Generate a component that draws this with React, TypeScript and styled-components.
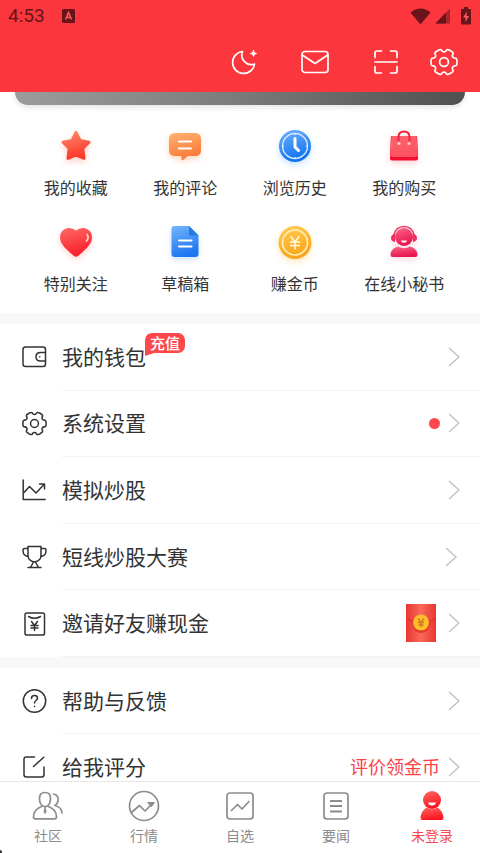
import React from 'react';
import styled, { createGlobalStyle, css } from 'styled-components';

const GlobalStyle = createGlobalStyle`
  *, *::before, *::after { box-sizing: border-box; }
  body {
    margin: 0;
    background: #fff;
    color: #333;
    font-family: 'Noto Sans CJK SC', 'Noto Sans', sans-serif;
  }
  button { margin: 0; padding: 0; border: 0; background: none; font: inherit; color: inherit; cursor: pointer; }
  a { color: inherit; text-decoration: none; }
  svg { display: block; flex: none; }
`;

const Screen = styled.div`
  display: flex;
  flex-direction: column;
  height: 100vh;
  overflow: hidden;
`;

const Header = styled.header`
  flex: none;
  background: #fb363c;
`;

const StatusBar = styled.div`
  display: flex;
  align-items: center;
  height: 32px;
  padding: 0 6px 0 8px;
  color: #69141a;
`;

const Clock = styled.time`
  font: 19px/32px Roboto, sans-serif;
  margin-right: 17px;
`;

const StatusIcons = styled.div`
  display: flex;
  align-items: center;
  gap: 4px;
  margin-left: auto;
`;

const Toolbar = styled.div`
  display: flex;
  justify-content: flex-end;
  height: 60px;
  padding-right: 13px;
`;

const ToolButton = styled.button<{ $narrow?: boolean }>`
  display: flex;
  align-items: center;
  justify-content: center;
  width: ${(p) => (p.$narrow ? 46 : 71)}px;
  color: #fff;
`;

const Content = styled.main`
  flex: 1;
  min-height: 0;
  overflow-y: auto;
  scrollbar-width: none;
`;

const Banner = styled.div`
  height: 13px;
  margin: 0 15px;
  border-radius: 0 0 13px 13px;
  background: linear-gradient(100deg, #9c9c9c, #7e7e7e 45%, #505050);
  box-shadow: 0 2px 6px rgba(0, 0, 0, 0.12);
`;

const Shortcuts = styled.nav`
  display: grid;
  grid-template-columns: repeat(4, 1fr);
  row-gap: 16px;
  padding: 24px 21px 8px;
`;

const Shortcut = styled.a`
  display: flex;
  flex-direction: column;
  align-items: center;
  gap: 12px;
  height: 80px;
  font-size: 16px;
  line-height: 24px;
  white-space: nowrap;
`;

const Glow = styled.span<{ $color: string }>`
  display: block;
  filter: drop-shadow(0 3px 3px ${(p) => p.$color});
`;

const Group = styled.section<{ $rows: number }>`
  display: flex;
  flex-direction: column;
  border-top: 11px solid #f8f8f8;
  ${(p) => p.$rows === 5 && css`min-height: 344px;`}
`;

const Row = styled.a`
  display: flex;
  flex: 1 0 0;
  min-height: 66px;
  align-items: stretch;
  gap: 15px;
  padding-left: 22px;
`;

const RowIcon = styled.span`
  display: flex;
  align-items: center;
  justify-content: center;
  width: 25px;
`;

const RowBody = styled.span<{ $inset?: boolean }>`
  display: flex;
  flex: 1;
  align-items: center;
  padding-right: ${(p) => (p.$inset ? 23 : 20)}px;
  border-bottom: 1px solid #f3f3f3;
`;

const RowLabel = styled.span`
  position: relative;
  padding-bottom: 2px;
  font-size: 21px;
  line-height: 28px;
`;

const Badge = styled.span`
  position: absolute;
  left: 83px;
  top: -9px;
  padding: 0 5px;
  border-radius: 7px 7px 7px 0;
  background: #fd484c;
  color: #fff;
  font-size: 15px;
  font-weight: 500;
  line-height: 20px;
  white-space: nowrap;
  &::after {
    content: '';
    position: absolute;
    left: 0;
    top: 100%;
    border-top: 3px solid #fd484c;
    border-right: 9px solid transparent;
  }
`;

const RowEnd = styled.span<{ $gap?: number }>`
  display: flex;
  align-items: center;
  gap: ${(p) => p.$gap ?? 8}px;
  margin-left: auto;
`;

const Dot = styled.span`
  width: 11px;
  height: 11px;
  border-radius: 50%;
  background: #fd484c;
`;

const Hint = styled.span`
  padding-bottom: 2px;
  color: #fb4247;
  font-size: 18px;
  line-height: 26px;
`;

const TabBar = styled.nav`
  position: relative;
  display: grid;
  grid-template-columns: repeat(5, 1fr);
  flex: none;
  height: 72px;
  border-top: 1px solid #e8e8e8;
  background: #fff;
  &::after {
    content: '';
    position: absolute;
    left: 0;
    bottom: 0;
    width: 2px;
    height: 3px;
    border-top-right-radius: 2px;
    background: #333;
  }
`;

const Tab = styled.a<{ $active?: boolean }>`
  display: flex;
  flex-direction: column;
  align-items: center;
  gap: 2px;
  padding-top: 8px;
  color: ${(p) => (p.$active ? '#fb4a4f' : '#8c8c8c')};
  font-size: 14px;
  line-height: 22px;
`;

/* Six-lobed cog outline with rounded corners, centred in a 28 unit box. */
const cogPath = (() => {
  const pts: number[][] = [];
  const polar = (r: number, deg: number) => {
    const a = (deg * Math.PI) / 180;
    pts.push([14 + r * Math.cos(a), 14 + r * Math.sin(a)]);
  };
  for (let a = 0; a < 360; a += 60) {
    polar(13.5, a - 16);
    polar(13.5, a + 16);
    polar(10.2, a + 22);
    polar(10.2, a + 38);
  }
  const lerp = (p: number[], q: number[], t: number) =>
    `${(p[0] + (q[0] - p[0]) * t).toFixed(2)} ${(p[1] + (q[1] - p[1]) * t).toFixed(2)}`;
  return (
    pts
      .map((p, i) => {
        const prev = pts[(i + pts.length - 1) % pts.length];
        const next = pts[(i + 1) % pts.length];
        return `${i ? 'L' : 'M'}${lerp(p, prev, 0.42)}Q${p[0].toFixed(2)} ${p[1].toFixed(2)} ${lerp(p, next, 0.42)}`;
      })
      .join('') + 'Z'
  );
})();

type LineProps = { w: number; h: number; box?: string; sw?: number; children: React.ReactNode };
const Line = ({ w, h, box, sw = 1.5, children }: LineProps) => (
  <svg width={w} height={h} viewBox={box ?? `0 0 ${w} ${h}`} fill="none" stroke="currentColor"
    strokeWidth={sw} strokeLinecap="round" strokeLinejoin="round" aria-hidden="true">
    {children}
  </svg>
);

const Cog = ({ size, sw }: { size: number; sw: number }) => (
  <Line w={size} h={size} box="0 0 28 28" sw={sw}>
    <path d={cogPath} />
    <circle cx="14" cy="14" r="4.4" />
  </Line>
);

const Chevron = () => (
  <svg width="12" height="20" viewBox="0 0 12 20" fill="none" stroke="#c2c2c2" strokeWidth="1.5" aria-hidden="true">
    <path d="M1 1l10 9-10 9" />
  </svg>
);

const Grad = ({ id, from, to }: { id: string; from: string; to: string }) => (
  <linearGradient id={id} x1="0" y1="0" x2="0.3" y2="1">
    <stop offset="0" stopColor={from} />
    <stop offset="1" stopColor={to} />
  </linearGradient>
);

const Pic = ({ children }: { children: React.ReactNode }) => (
  <svg width="34" height="34" viewBox="0 0 34 34" aria-hidden="true">{children}</svg>
);

const shortcuts = [
  {
    label: '我的收藏', glow: 'rgba(255,90,60,.3)',
    icon: (
      <Pic>
        <defs><Grad id="star" from="#ff8a6a" to="#fc3a2c" /></defs>
        <path fill="url(#star)" stroke="url(#star)" strokeWidth="3" strokeLinejoin="round"
          d="M17 3.500l4 8 9 1.700-6.200 6.300 1.200 9.800-8-3.400-8 3.400 1.200-9.800L4 13.200l9-1.700z" />
      </Pic>
    ),
  },
  {
    label: '我的评论', glow: 'rgba(255,130,60,.3)',
    icon: (
      <Pic>
        <defs><Grad id="chat" from="#ffb272" to="#fb7a38" /></defs>
        <path fill="url(#chat)" d="M7 4h20q6 0 6 6v11q0 6-6 6h-7l-5 4q-1.500 1-1.500-1v-3H7q-6 0-6-6V10q0-6 6-6z" />
        <path stroke="#fff" strokeWidth="2" strokeLinecap="round" d="M11 12.500h12M11 19.500h12" />
      </Pic>
    ),
  },
  {
    label: '浏览历史', glow: 'rgba(50,140,255,.25)',
    icon: (
      <Pic>
        <defs><Grad id="clock" from="#6fb2fb" to="#1273f2" /></defs>
        <circle cx="17" cy="17" r="16" fill="url(#clock)" />
        <circle cx="17" cy="17" r="12.500" fill="none" stroke="#d6e9ff" strokeWidth="1.400" />
        <path stroke="#d6e9ff" strokeWidth="1.500" d="M17 4v2M17 28v2M4 17h2M28 17h2" />
        <path fill="none" stroke="#fff" strokeWidth="3" strokeLinecap="round" strokeLinejoin="round" d="M17 9.500V18l3.500 3.500" />
      </Pic>
    ),
  },
  {
    label: '我的购买', glow: 'rgba(255,40,70,.2)',
    icon: (
      <Pic>
        <defs><Grad id="bag" from="#ff6470" to="#fb5361" /></defs>
        <path fill="#f30f30" d="M5 7h24q1 0 1.200 1L31 29.500q0 2-2 2H5q-2 0-2-2L3.800 8Q4 7 5 7z" />
        <path fill="url(#bag)" d="M5.500 7h23q1 0 1.200 1l.8 18q0 2-2 2h-23q-2 0-2-2L4.300 8q.2-1 1.200-1z" />
        <path fill="none" stroke="#f31f3b" strokeWidth="2" d="M11.500 12V8q0-5.500 5.500-5.500T22.500 8v4" />
        <circle cx="12" cy="14.500" r="1.500" fill="#ffd0d4" /><circle cx="22" cy="14.500" r="1.500" fill="#ffd0d4" />
      </Pic>
    ),
  },
  {
    label: '特别关注', glow: 'rgba(255,50,50,.2)',
    icon: (
      <Pic>
        <defs><Grad id="heart" from="#ff6c66" to="#f91f2b" /></defs>
        <path fill="url(#heart)" d="M17 5.500Q13 2.500 9 3 1 4.500 1 12.500C1 19.500 8 25 15 31q2 1.500 4 0c7-6 14-11.500 14-18.500Q33 4.500 25 3q-4-.5-8 2.500z" />
        <path fill="none" stroke="#ffd4d2" strokeWidth="1.700" strokeLinecap="round" d="M28 9.500q2.500 3-.5 6.500" />
      </Pic>
    ),
  },
  {
    label: '草稿箱', glow: 'rgba(50,130,250,.22)',
    icon: (
      <Pic>
        <defs><Grad id="doc" from="#75b5fb" to="#1c77f0" /></defs>
        <path fill="url(#doc)" d="M6 1h15l9.500 9.500V29q0 3-3 3H6.500q-3 0-3-3V4Q3.500 1 6 1z" />
        <path fill="#2379df" d="M21 1l9.500 9.500H23q-2 0-2-2z" />
        <path stroke="#fff" strokeWidth="2" strokeLinecap="round" d="M11 15.500h12.500M11 21.500h12.500" />
      </Pic>
    ),
  },
  {
    label: '赚金币', glow: 'rgba(255,180,50,.3)',
    icon: (
      <Pic>
        <defs><Grad id="coin" from="#ffce55" to="#fba51c" /></defs>
        <circle cx="17" cy="17.500" r="16.500" fill="url(#coin)" />
        <circle cx="17" cy="17.500" r="12.500" fill="none" stroke="#fff3bd" strokeWidth="1.500" />
        <path fill="none" stroke="#fff9da" strokeWidth="1.600" d="M12.500 11l4.500 6 4.500-6M12 17h10M12 20.500h10M17 17v7.500" />
      </Pic>
    ),
  },
  {
    label: '在线小秘书', glow: 'rgba(240,30,90,.15)',
    icon: (
      <Pic>
        <defs><Grad id="agent" from="#fb6685" to="#e81650" /></defs>
        <path fill="none" stroke="#f33c66" strokeWidth="1.600" d="M6.500 11Q8.500 1.500 17 1.500T27.500 11" />
        <path fill="#f1305e" d="M8 9v8q-4-.5-4-4t4-4zM26 9v8q4-.5 4-4t-4-4z" />
        <circle cx="17" cy="12" r="9" fill="url(#agent)" />
        <path fill="#fff" d="M14 15.500h6q-.3 2.200-3 2.200t-3-2.200z" />
        <path fill="url(#agent)" d="M11 21.500q6 3.500 12 0 7.500 2 7.500 8.500 0 2-2 2h-23q-2 0-2-2 0-6.500 7.500-8.500z" />
      </Pic>
    ),
  },
];

const WalletIcon = () => (
  <Line w={25} h={22}>
    <rect x="1" y="1" width="22.500" height="19.500" rx="2.500" />
    <path d="M23.500 6.500h-5q-4.500 0-4.500 4.300t4.500 4.200h5" />
    <path d="M17.700 10.800h.1" />
  </Line>
);
const ChartIcon = () => (
  <Line w={25} h={22}>
    <path d="M1.200 1v19.500h22M2 13.500l5.500-6 6.500 6.500 8-8.500M17.500 5h5v5" />
  </Line>
);
const TrophyIcon = () => (
  <Line w={25} h={24}>
    <path d="M6 1.500h13v9q0 5.500-6.500 6.500Q6 16 6 10.500zM6 3.500H2.500Q1 3.500 1 5.500 1 11 6 11.500M19 3.500h3.500Q24 3.500 24 5.500 24 11 19 11.500M11.500 17l-3 5.500M13.500 17l3 5.500M6 22.500h13" />
  </Line>
);
const InviteIcon = () => (
  <Line w={25} h={24}>
    <rect x="3" y="1" width="19.500" height="22" rx="1.800" />
    <path d="M6.500 4.500q6 3.500 12 0M9.500 9.500l3 4 3-4M9 13.500h7M9 16h7M12.500 13.500v5" />
  </Line>
);
const HelpIcon = () => (
  <Line w={25} h={24}>
    <circle cx="12.500" cy="12" r="11.200" />
    <path d="M9.500 9.500q0-3 3-3t3 2.700q0 1.300-1.500 2.300t-1.500 2.500M12.500 17.200v.3" />
  </Line>
);
const RateIcon = () => (
  <Line w={25} h={24}>
    <path d="M12.500 2H4.200Q2 2 2 4.200v15.600Q2 22 4.200 22h15.600q2.200 0 2.200-2.200V12M11.500 11.500L21.800 2.200" />
  </Line>
);

const RedEnvelope = () => (
  <svg width="30" height="38" viewBox="0 0 30 38" aria-hidden="true">
    <defs>
      <linearGradient id="envelope"><stop stopColor="#e83630" /><stop offset=".5" stopColor="#f9695a" /><stop offset="1" stopColor="#e83630" /></linearGradient>
    </defs>
    <path fill="url(#envelope)" d="M0 0h30v38H0z" />
    <path fill="none" stroke="#d42c29" d="M0 14q15 11 30 0" />
    <circle cx="15" cy="20" r="9" fill="#e6382c" />
    <circle cx="15" cy="18.500" r="8" fill="#fdbd2c" />
    <path fill="none" stroke="#d27b16" strokeWidth="1.400" d="M12 14.500l3 4 3-4M12 18.500h6M12.500 21h5M15 18v5" />
  </svg>
);

const FriendsIcon = () => (
  <Line w={32} h={32} sw={1.700}>
    <path d="M13 2.500q5.800 0 5.500 6.500-.3 6-4 7.500h-3q-3.700-1.500-4-7.500Q7.200 2.500 13 2.500z" />
    <path d="M9.500 16.500Q1.500 19.500 1.500 27q0 1.800 2 1.800h19q2 0 2-1.800 0-7.500-8-10.500" />
    <path fill="currentColor" strokeWidth="1" d="M13 17.500l-1 4.500 1 1.500 1-1.500z" />
    <path d="M21.500 4q5.500 1 4.500 7-.5 3-3 4.500 6.500 1.500 7 7.500" />
  </Line>
);
const MarketIcon = () => (
  <Line w={32} h={32} sw={1.700}>
    <circle cx="16" cy="16" r="14.500" />
    <path d="M4 22l7.500-6.500 5.500 5.500 8-8" />
    <path fill="currentColor" strokeWidth="1" d="M20 12.500h6.500l-3 4z" />
  </Line>
);
const WatchIcon = () => (
  <Line w={32} h={32} sw={1.700}>
    <rect x="3" y="3" width="26" height="26" rx="3" />
    <path d="M7.500 20.500l6-6 4.500 4.500 7-7.500" />
  </Line>
);
const NewsIcon = () => (
  <Line w={32} h={32} sw={1.700}>
    <rect x="4" y="3" width="24" height="26" rx="3" />
    <path strokeWidth="2" strokeLinecap="butt" d="M10 11h12M10 16h12M10 21.500h12" />
  </Line>
);
const MeIcon = () => (
  <svg width="32" height="32" viewBox="0 0 32 32" aria-hidden="true">
    <defs><Grad id="me" from="#ff6862" to="#f91722" /></defs>
    <path fill="url(#me)" d="M10.500 17.500q5.500 3.500 11 0 5.500 3.500 6 10.500.2 2-2 2H6.500q-2 0-2-2 .5-7 6-10.500z" />
    <circle cx="16" cy="10" r="9" fill="url(#me)" />
    <path fill="#fff" d="M12 12.500h8q-.5 3-4 3t-4-3z" />
  </svg>
);

const tabs = [
  { label: '社区', icon: <FriendsIcon /> },
  { label: '行情', icon: <MarketIcon /> },
  { label: '自选', icon: <WatchIcon /> },
  { label: '要闻', icon: <NewsIcon /> },
  { label: '未登录', icon: <MeIcon />, active: true },
];

type ItemProps = {
  icon: React.ReactNode; label: string; badge?: string; extra?: React.ReactNode; gap?: number; inset?: boolean;
};
const Item = ({ icon, label, badge, extra, gap, inset }: ItemProps) => (
  <Row href="#">
    <RowIcon>{icon}</RowIcon>
    <RowBody $inset={inset}>
      <RowLabel>{label}{badge && <Badge>{badge}</Badge>}</RowLabel>
      <RowEnd $gap={gap}>{extra}<Chevron /></RowEnd>
    </RowBody>
  </Row>
);

export default function App() {
  return (
    <Screen>
      <GlobalStyle />
      <Header>
        <StatusBar>
          <Clock>4:53</Clock>
          <svg width="13" height="14" viewBox="0 0 13 14" aria-hidden="true">
            <rect width="13" height="14" rx="1.500" fill="#69141a" />
            <path fill="none" stroke="#fb5a5f" strokeWidth="1.500" d="M3.500 10.500l3-7 3 7M4.500 8.500h4" />
          </svg>
          <StatusIcons>
            <svg width="21" height="17" viewBox="0 0 21 17" aria-hidden="true">
              <path fill="#69141a" d="M.5 4.500Q10.500-3.500 20.500 4.500L10.500 16.500z" />
            </svg>
            <svg width="15" height="16" viewBox="0 0 15 16" aria-hidden="true">
              <path fill="#a9252b" d="M15 .5v15H.5z" /><path fill="#69141a" d="M11 4.500v11H.5z" />
            </svg>
            <svg width="20" height="18" viewBox="0 0 20 18" aria-hidden="true">
              <path fill="#69141a" d="M10 0h4v2h2q1 0 1 1v13.500q0 1-1 1H8q-1 0-1-1V3q0-1 1-1h2z" />
              <path fill="#fb5a5f" d="M13 4.500l-4 6h2.500V15l3.500-6h-2.500z" />
            </svg>
          </StatusIcons>
        </StatusBar>
        <Toolbar>
          <ToolButton aria-label="夜间模式">
            <Line w={26} h={26} sw={1.700}>
              <path d="M11.500 2.500A11 11 0 1 0 23.500 15 9.500 9.500 0 0 1 11.500 2.500z" />
              <path fill="currentColor" strokeWidth="1" d="M22.500 1.500l.8 2.200 2.200.8-2.200.8-.8 2.200-.8-2.200-2.200-.8 2.200-.8z" />
            </Line>
          </ToolButton>
          <ToolButton aria-label="消息">
            <Line w={28} h={24} sw={1.700}>
              <rect x="1" y="1.500" width="26" height="21" rx="3" /><path d="M2 5.500l12 8 12-8" />
            </Line>
          </ToolButton>
          <ToolButton aria-label="扫一扫">
            <Line w={24} h={24} sw={1.700}>
              <path d="M1 7.500V3q0-2 2-2h4.500M16.500 1H21q2 0 2 2v4.500M23 16.500V21q0 2-2 2h-4.500M7.500 23H3q-2 0-2-2v-4.500M1 12h22" />
            </Line>
          </ToolButton>
          <ToolButton $narrow aria-label="设置"><Cog size={28} sw={1.700} /></ToolButton>
        </Toolbar>
      </Header>
      <Content>
        <Banner />
        <Shortcuts>
          {shortcuts.map((s) => (
            <Shortcut href="#" key={s.label}>
              <Glow $color={s.glow}>{s.icon}</Glow>
              {s.label}
            </Shortcut>
          ))}
        </Shortcuts>
        <Group $rows={5}>
          <Item icon={<WalletIcon />} label="我的钱包" badge="充值" />
          <Item icon={<Cog size={25} sw={1.700} />} label="系统设置" extra={<Dot />} />
          <Item icon={<ChartIcon />} label="模拟炒股" />
          <Item icon={<TrophyIcon />} label="短线炒股大赛" inset />
          <Item icon={<InviteIcon />} label="邀请好友赚现金" extra={<RedEnvelope />} gap={12} />
        </Group>
        <Group $rows={2}>
          <Item icon={<HelpIcon />} label="帮助与反馈" />
          <Item icon={<RateIcon />} label="给我评分" extra={<Hint>评价领金币</Hint>} />
        </Group>
      </Content>
      <TabBar>
        {tabs.map((t) => (
          <Tab href="#" key={t.label} $active={t.active} aria-current={t.active ? 'page' : undefined}>
            {t.icon}
            {t.label}
          </Tab>
        ))}
      </TabBar>
    </Screen>
  );
}
